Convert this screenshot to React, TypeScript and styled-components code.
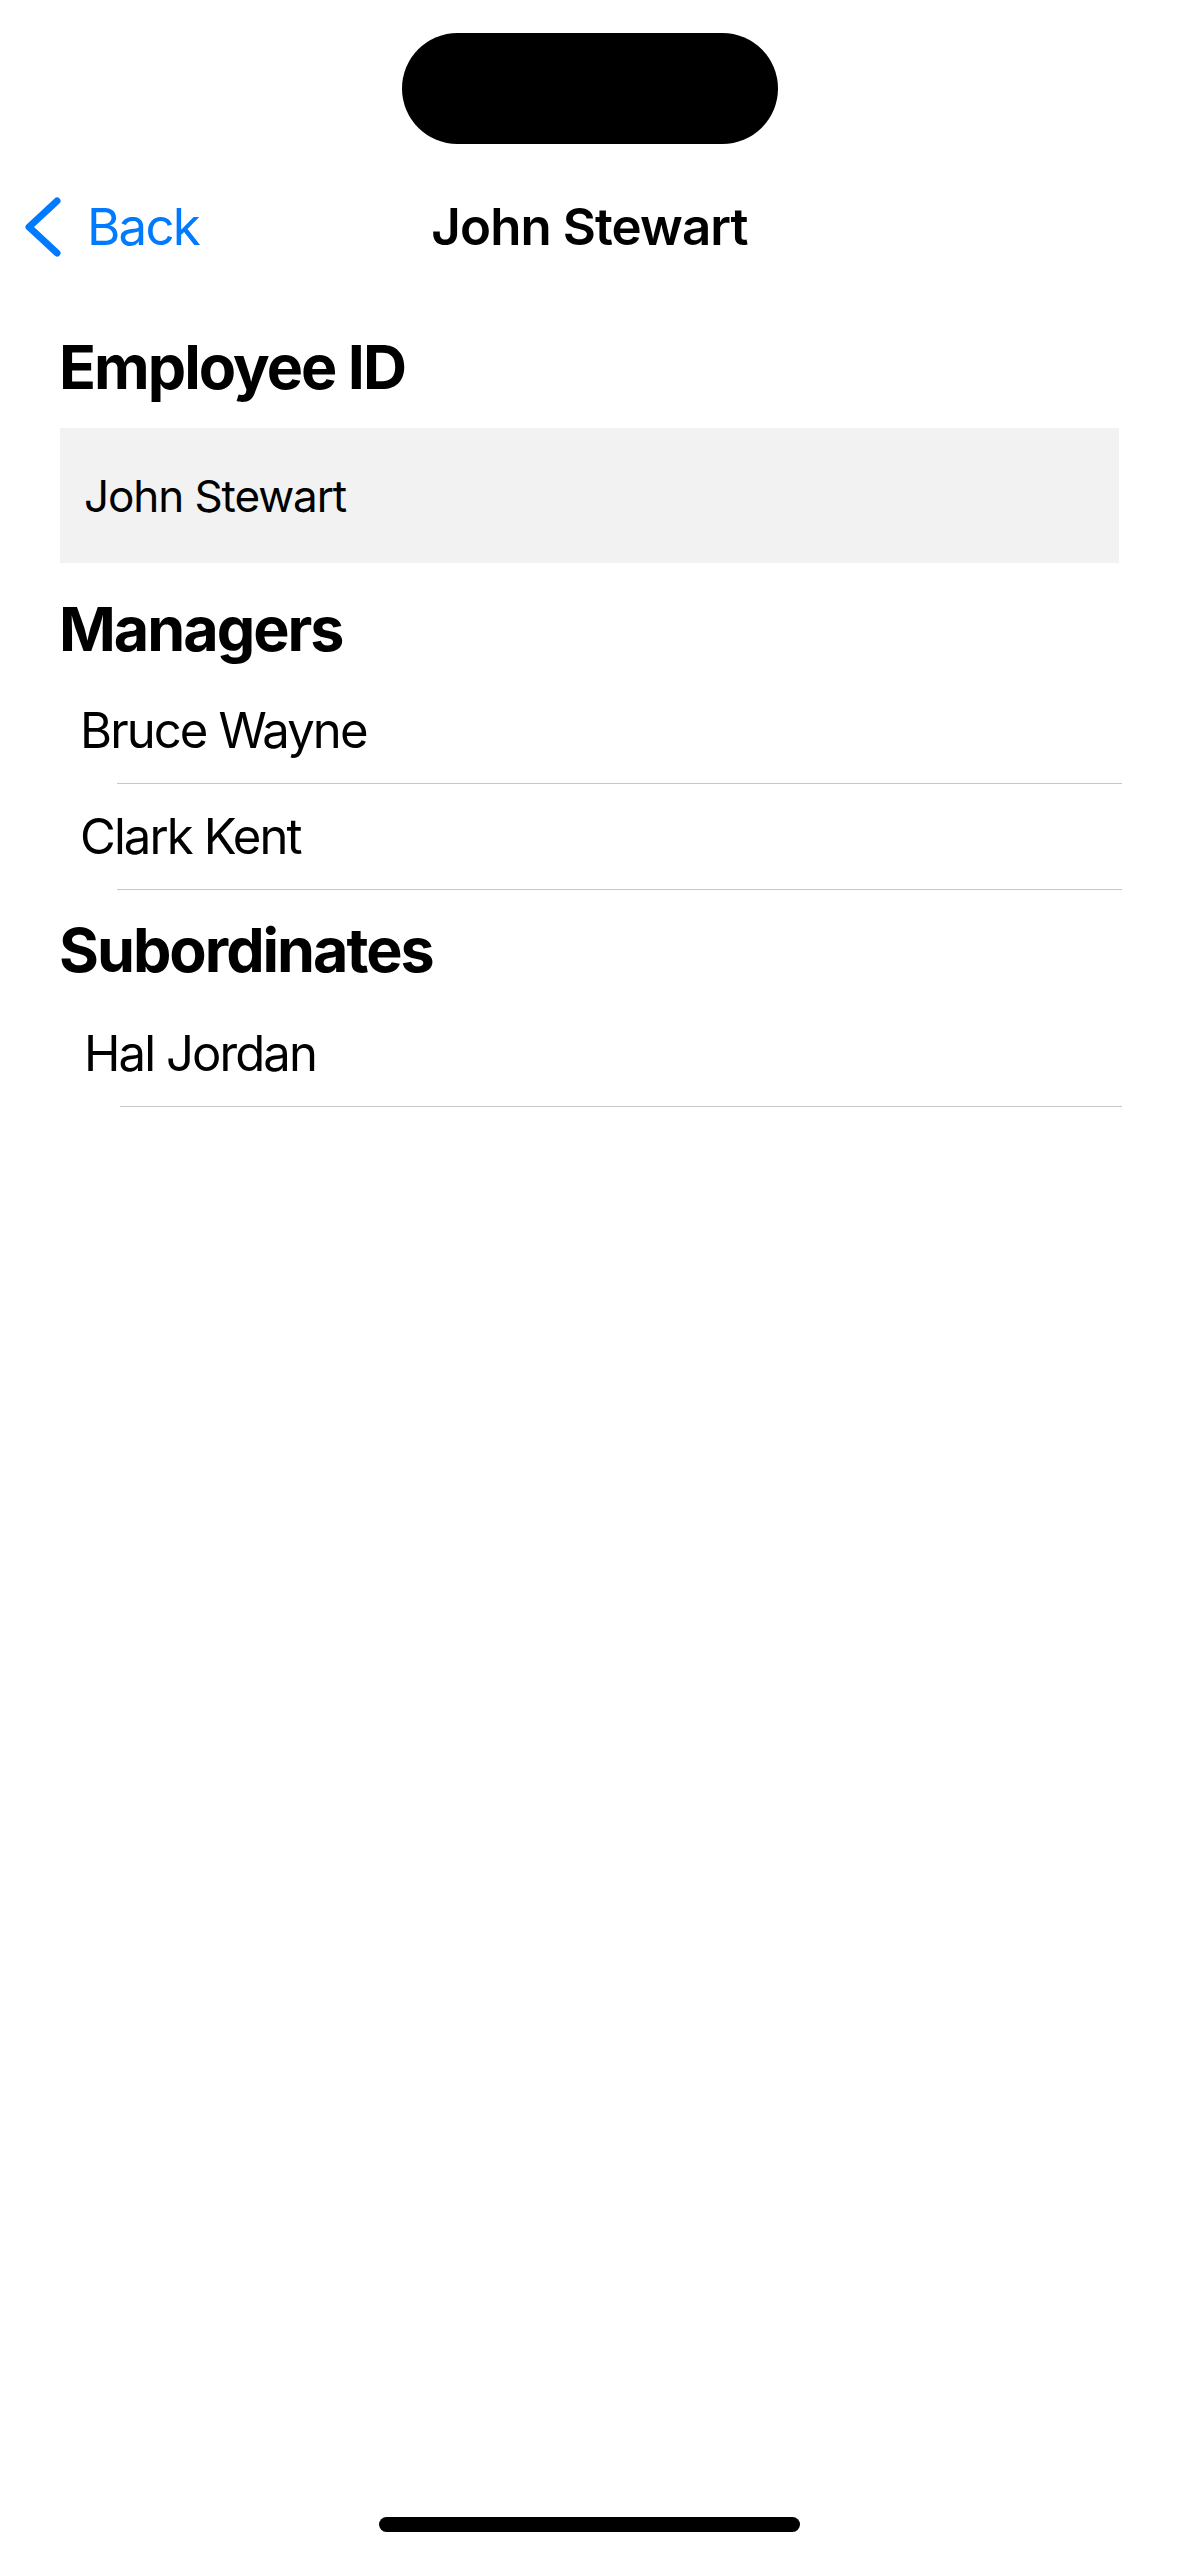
import React from "react";
import styled, { createGlobalStyle } from "styled-components";

const GlobalStyle = createGlobalStyle`
  html, body {
    margin: 0;
    padding: 0;
    background: #ffffff;
  }
  body {
    font-family: Inter, "Noto Sans", Roboto, sans-serif;
    color: #000;
    -webkit-font-smoothing: antialiased;
  }
  * { box-sizing: border-box; }
`;

const Screen = styled.div`
  width: 1179px;
  height: 2556px;
  display: flex;
  flex-direction: column;
  background: #ffffff;
  overflow: hidden;
`;

const StatusBar = styled.div`
  height: 176px;
  padding-top: 33px;
  display: flex;
  justify-content: center;
`;

const Island = styled.div`
  width: 376px;
  height: 111px;
  border-radius: 56px;
  background: #000;
`;

const NavBar = styled.div`
  height: 101px;
  display: grid;
  grid-template-columns: 1fr auto 1fr;
  align-items: center;
`;

const BackButton = styled.button`
  justify-self: start;
  display: flex;
  align-items: center;
  gap: 23px;
  padding: 0 0 0 24px;
  border: none;
  background: transparent;
  color: #007aff;
  font-family: Inter, "Noto Sans", sans-serif;
  font-size: 51px;
  line-height: 101px;
  letter-spacing: -1.8px;
  cursor: pointer;
`;

const Title = styled.h1`
  margin: 0;
  font-size: 51px;
  font-weight: 600;
  line-height: 101px;
  letter-spacing: -0.9px;
`;

const Content = styled.main`
  display: flex;
  flex-direction: column;
  padding-top: 50px;
`;

const SectionTitle = styled.h2<{ $gap: number }>`
  margin: 0 0 ${(p) => p.$gap}px 0;
  padding-left: 59px;
  font-size: 61px;
  font-weight: 700;
  line-height: 80px;
  letter-spacing: -2px;
`;

const IdField = styled.div`
  margin: 0 60px 26px 60px;
  height: 135px;
  background: #f2f2f2;
  display: flex;
  align-items: center;
  padding-left: 24px;
  font-size: 44px;
  letter-spacing: -1.1px;
`;

const List = styled.ul<{ $after: number }>`
  list-style: none;
  margin: 0 0 ${(p) => p.$after}px 0;
  padding: 0;
`;

const Row = styled.li`
  display: flex;
  flex-direction: column;
`;

const RowLabel = styled.div<{ $indent: number }>`
  height: 105px;
  display: flex;
  align-items: center;
  padding-left: ${(p) => p.$indent}px;
  font-size: 49px;
  letter-spacing: -1.9px;
`;

const Divider = styled.div<{ $inset: number }>`
  height: 1px;
  margin: 0 57px 0 ${(p) => p.$inset}px;
  background: #c8c8cc;
`;

const HomeIndicator = styled.div`
  margin: auto auto 24px auto;
  width: 421px;
  height: 15px;
  border-radius: 8px;
  background: #000;
`;

const Chevron = () => (
  <svg width="40" height="62" viewBox="0 0 40 62" aria-hidden="true">
    <path
      d="M33 5 L5 31 L33 57"
      fill="none"
      stroke="#007aff"
      strokeWidth="7"
      strokeLinecap="round"
      strokeLinejoin="round"
    />
  </svg>
);

type Section = {
  title: string;
  people: string[];
  indent: number;
  inset: number;
  gap: number;
  after: number;
};

const sections: Section[] = [
  { title: "Managers", people: ["Bruce Wayne", "Clark Kent"], indent: 80, inset: 117, gap: 9, after: 20 },
  { title: "Subordinates", people: ["Hal Jordan"], indent: 84, inset: 120, gap: 11, after: 0 },
];

export default function App() {
  return (
    <>
      <GlobalStyle />
      <Screen>
        <StatusBar>
          <Island />
        </StatusBar>
        <NavBar>
          <BackButton>
            <Chevron />
            Back
          </BackButton>
          <Title>John Stewart</Title>
          <div />
        </NavBar>
        <Content>
          <SectionTitle $gap={21}>Employee ID</SectionTitle>
          <IdField>John Stewart</IdField>
          {sections.map((s) => (
            <React.Fragment key={s.title}>
              <SectionTitle $gap={s.gap}>{s.title}</SectionTitle>
              <List $after={s.after}>
                {s.people.map((name) => (
                  <Row key={name}>
                    <RowLabel $indent={s.indent}>{name}</RowLabel>
                    <Divider $inset={s.inset} />
                  </Row>
                ))}
              </List>
            </React.Fragment>
          ))}
        </Content>
        <HomeIndicator />
      </Screen>
    </>
  );
}
